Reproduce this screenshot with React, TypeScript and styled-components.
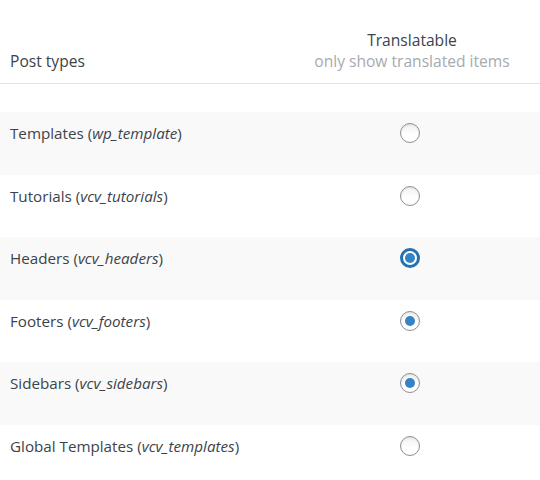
import styled, { createGlobalStyle } from 'styled-components'

const GlobalStyle = createGlobalStyle`
	body {
		margin: 0;
		background: #fff;
		font-family: 'Open Sans', 'Noto Sans', 'Liberation Sans', sans-serif;
		color: #3c434a;
	}
`

const Table = styled.div`
	width: 540px;
	display: grid;
	grid-template-columns: 1fr 256px;
`

const HeadCell = styled.div<{ $center?: boolean }>`
	padding: 30px 10px 11px;
	font-size: 15.6px;
	line-height: 21px;
	border-bottom: 1px solid #e2e4e7;
	text-align: ${props => (props.$center ? 'center' : 'left')};
	display: flex;
	flex-direction: column;
	justify-content: flex-end;
	align-items: ${props => (props.$center ? 'center' : 'flex-start')};
	white-space: nowrap;
`

const SubTitle = styled.span`
	color: #a7aaad;
`

const Spacer = styled.div`
	grid-column: 1 / -1;
	height: 28px;
`

const Row = styled.div<{ $striped: boolean }>`
	grid-column: 1 / -1;
	display: grid;
	grid-template-columns: 1fr 256px;
	height: 62.5px;
	background: ${props => (props.$striped ? '#f9f9f9' : '#fff')};
`

const NameCell = styled.div`
	padding: 11px 10px 0;
	font-size: 15.2px;
	line-height: 21px;
	color: #3c434a;

	em {
		font-style: italic;
	}
`

const RadioCell = styled.div`
	display: flex;
	justify-content: center;
	padding: 11px 4px 0 0;
`

const Radio = styled.span<{ $checked?: boolean; $focus?: boolean }>`
	box-sizing: border-box;
	width: 20px;
	height: 20px;
	border-radius: 50%;
	border: ${props => (props.$focus ? '3px solid #2271b1' : '1px solid #8c8f94')};
	background: ${props => (props.$focus ? '#fff' : 'linear-gradient(#f1f1f1, #fff 60%)')};
	box-shadow: ${props => (props.$focus ? 'none' : 'inset 0 1px 2px rgba(0,0,0,0.08)')};
	display: flex;
	align-items: center;
	justify-content: center;

	&::after {
		content: '';
		display: ${props => (props.$checked ? 'block' : 'none')};
		width: 10px;
		height: 10px;
		border-radius: 50%;
		background: #3582c4;
	}
`

const rows = [
	{ label: 'Templates', slug: 'wp_template', checked: false, focus: false },
	{ label: 'Tutorials', slug: 'vcv_tutorials', checked: false, focus: false },
	{ label: 'Headers', slug: 'vcv_headers', checked: true, focus: true },
	{ label: 'Footers', slug: 'vcv_footers', checked: true, focus: false },
	{ label: 'Sidebars', slug: 'vcv_sidebars', checked: true, focus: false },
	{ label: 'Global Templates', slug: 'vcv_templates', checked: false, focus: false },
]

export default function App() {
	return (
		<>
			<GlobalStyle />
			<Table>
				<HeadCell>Post types</HeadCell>
				<HeadCell $center>
					<span>Translatable</span>
					<SubTitle>only show translated items</SubTitle>
				</HeadCell>
				<Spacer />
				{rows.map((r, i) => (
					<Row key={r.slug} $striped={i % 2 === 0}>
						<NameCell>
							{r.label} (<em>{r.slug}</em>)
						</NameCell>
						<RadioCell>
							<Radio $checked={r.checked} $focus={r.focus} />
						</RadioCell>
					</Row>
				))}
			</Table>
		</>
	)
}
